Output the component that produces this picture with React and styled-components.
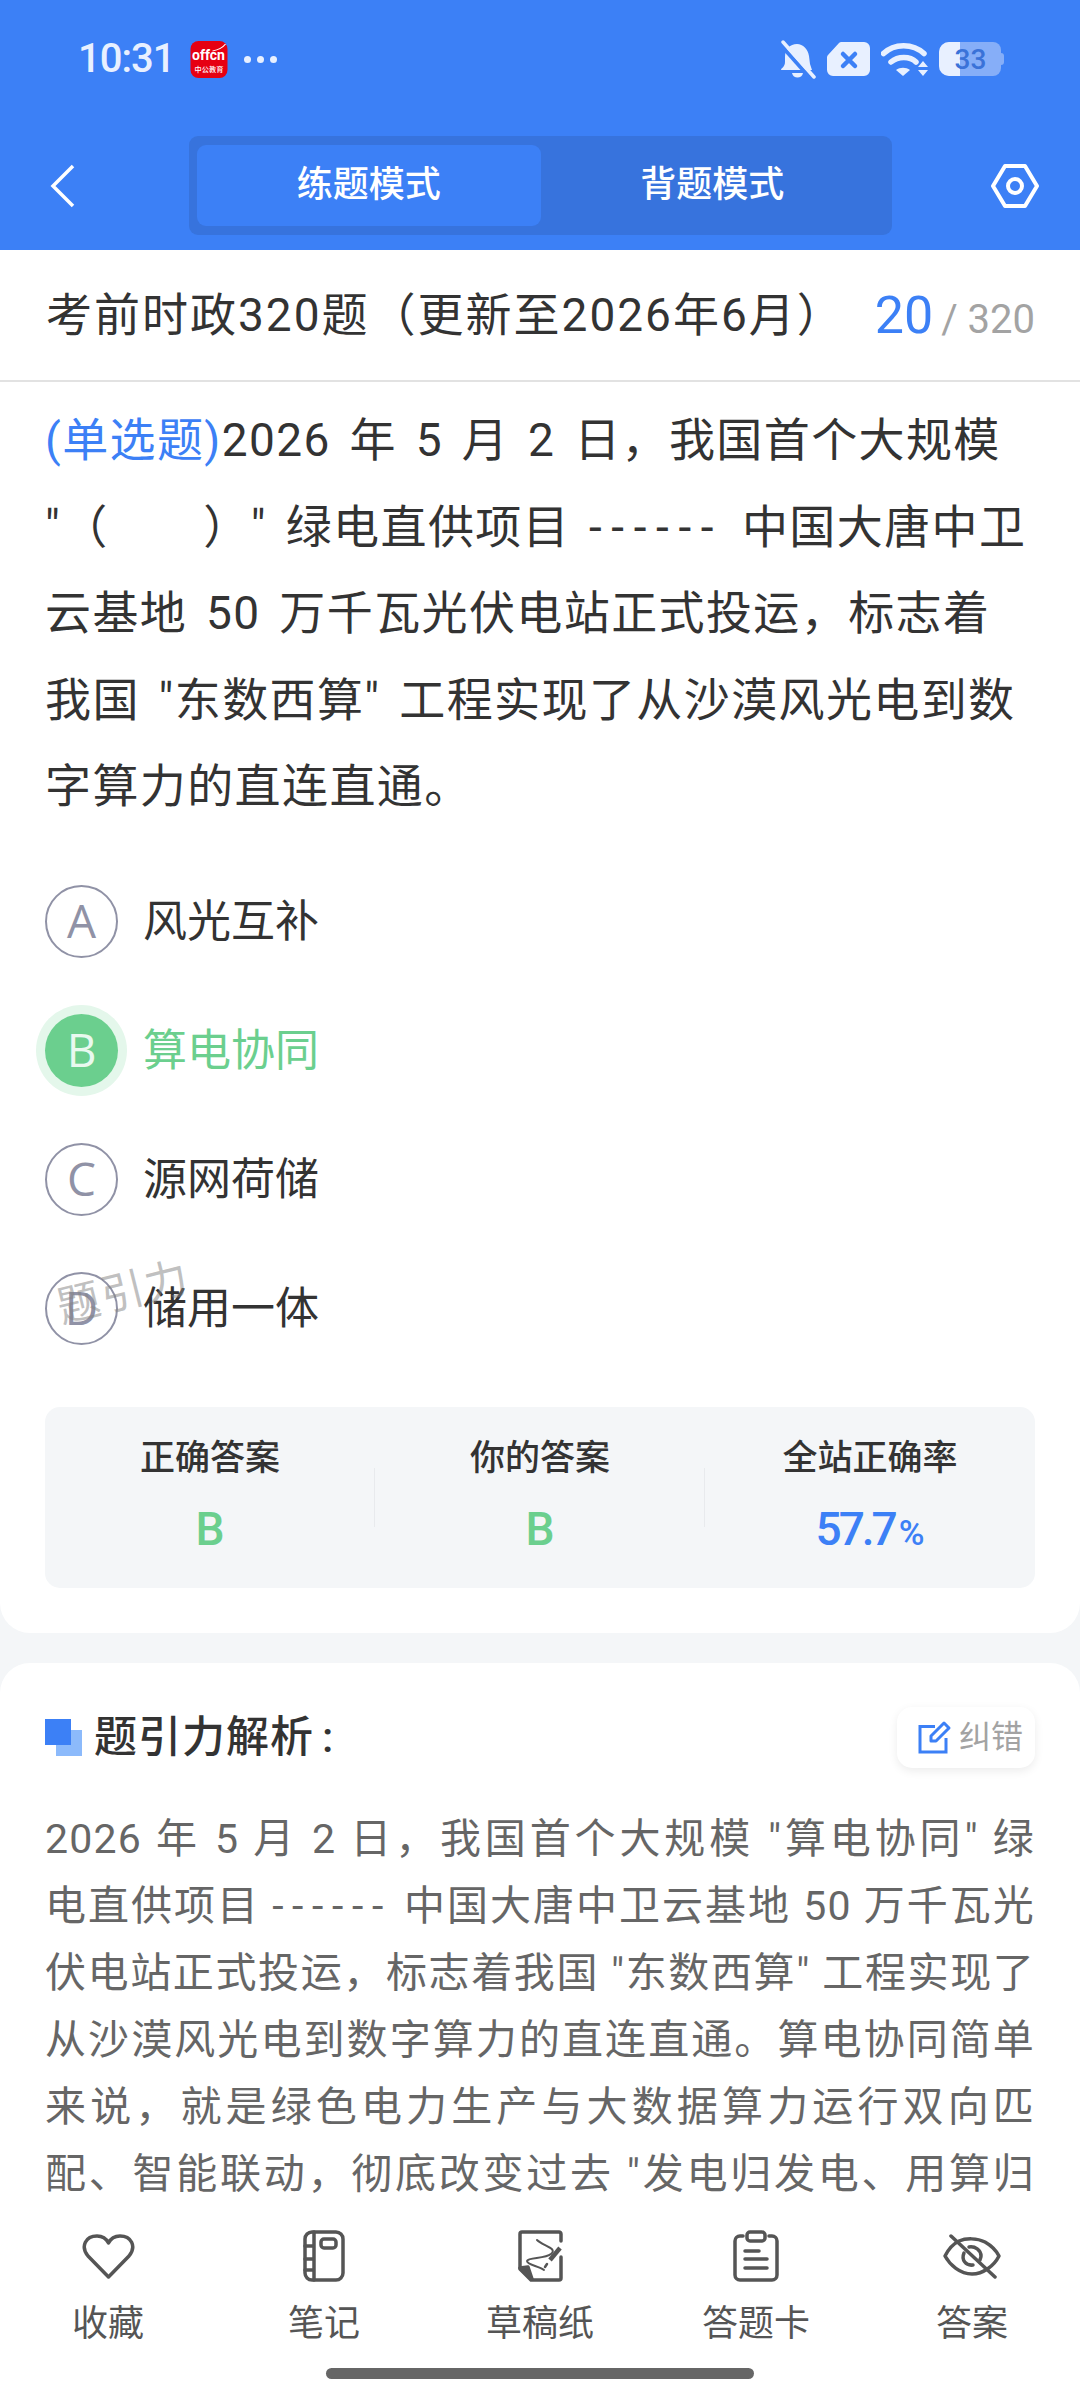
import React from "react";
import styled, { createGlobalStyle } from "styled-components";

const Global = createGlobalStyle`
  html, body { margin: 0; padding: 0; background: #f4f6f8; }
  body { font-family: "Roboto", "Noto Sans CJK SC", sans-serif; }
  * { box-sizing: border-box; }
`;

const cjk = `"Roboto", "Noto Sans CJK SC", sans-serif`;

const Phone = styled.div`
  position: relative;
  width: 1080px;
  height: 2400px;
  overflow: hidden;
  background: #f4f6f8;
  display: flex;
  flex-direction: column;
`;

const Head = styled.header`
  background: #3c80f6;
  height: 250px;
  display: flex;
  flex-direction: column;
`;

const StatusBar = styled.div`
  height: 118px;
  padding: 0 76px 0 78px;
  display: flex;
  align-items: center;
  color: #e8f0ff;
`;

const Clock = styled.span`
  font: 500 40px/1 ${cjk};
  letter-spacing: -1px;
  margin-right: 16px;
`;

const Dots = styled.span`
  display: flex;
  gap: 6px;
  margin-left: 16px;
  & > i { width: 7px; height: 7px; border-radius: 50%; background: #e8f0ff; }
`;

const StatusIcons = styled.div`
  margin-left: auto;
  display: flex;
  align-items: center;
  gap: 11px;
`;

const NavRow = styled.div`
  flex: 1;
  padding: 18px 40px 15px 46px;
  display: flex;
  align-items: center;
`;

const Tabs = styled.div`
  width: 703px;
  height: 99px;
  margin-left: 113px;
  padding: 9px 8px;
  border-radius: 9px;
  background: #3773dd;
  display: flex;
`;

const Tab = styled.div`
  flex: 1;
  border-radius: 9px;
  background: ${p => (p.$on ? "#3c80f6" : "transparent")};
  color: #fff;
  font: 500 36px/81px ${cjk};
  text-align: center;
`;

const Gear = styled.div`
  margin-left: auto;
  display: flex;
`;

const TitleBar = styled.div`
  height: 132px;
  background: #fff;
  border-bottom: 2px solid #e2e2e2;
  padding: 0 45px 0 46px;
  display: flex;
  align-items: center;
  justify-content: space-between;
`;

const Title = styled.h1`
  margin: 0;
  font: 400 46px/1 ${cjk};
  letter-spacing: 2px;
  color: #333;
  white-space: nowrap;
`;

const Count = styled.div`
  font-family: ${cjk};
  color: #a3a3a3;
  font-size: 40px;
  white-space: nowrap;
  & > b { font-weight: 400; font-size: 52px; color: #3c80f6; margin-right: 8px; }
`;

const Card = styled.section`
  background: #fff;
  border-radius: 0 0 30px 30px;
  padding: 15px 45px 45px;
`;

const Question = styled.p`
  margin: 0;
  font: 400 46px/86.500px ${cjk};
  letter-spacing: 1.4px;
  word-spacing: 6px;
  color: #333;
`;

const QType = styled.span`
  color: #3c80f6;
`;

const Line = styled.span`
  display: block;
  white-space: pre;
`;

const Dash = styled.span`
  letter-spacing: 0.21em;
`;

const Options = styled.div`
  margin-top: 56px;
  display: flex;
  flex-direction: column;
  gap: 57px;
`;

const Option = styled.div`
  position: relative;
  height: 72px;
  display: flex;
  align-items: center;
  gap: 25px;
  font: 400 44px/1 ${cjk};
  color: ${p => (p.$ok ? "#6bcf8e" : "#333")};
`;

const Badge = styled.div`
  width: 73px;
  height: 73px;
  padding-bottom: 4px;
  border-radius: 50%;
  display: flex;
  align-items: center;
  justify-content: center;
  font: 400 46px/1 "Open Sans", sans-serif;
  color: ${p => (p.$ok ? "#e9f9ef" : "#9092a6")};
  background: ${p => (p.$ok ? "#6bcf8e" : "transparent")};
  border: ${p => (p.$ok ? "none" : "2px solid #9092a6")};
  box-shadow: ${p => (p.$ok ? "0 0 0 9px #e4f7eb" : "none")};
`;

const Watermark = styled.span`
  position: absolute;
  left: 11px;
  top: -2px;
  font: 400 43px/1 ${cjk};
  color: rgba(130, 130, 130, 0.5);
  letter-spacing: 2px;
  transform: rotate(-14deg);
`;

const Stats = styled.div`
  margin-top: 62px;
  height: 181px;
  border-radius: 15px;
  background: #f4f6f8;
  display: flex;
`;

const Stat = styled.div`
  flex: 1;
  padding-top: 29px;
  position: relative;
  text-align: center;
  font-family: ${cjk};
  &:not(:last-child)::after {
    content: "";
    position: absolute;
    right: 0;
    top: 61px;
    height: 59px;
    width: 1px;
    background: #e8eaed;
  }
`;

const StatLabel = styled.div`
  font-size: 35px;
  line-height: 46px;
  font-weight: 500;
  color: #333;
`;

const StatValue = styled.div`
  margin-top: 22px;
  font-size: 46px;
  line-height: 50px;
  font-weight: 500;
  color: ${p => p.$c};
  letter-spacing: ${p => (p.$tight ? "-3px" : "0")};
  & > small { font-size: 35px; letter-spacing: 0; margin-left: 4px; }
`;

const Analysis = styled.section`
  flex: 1;
  margin-top: 30px;
  background: #fff;
  border-radius: 30px 30px 0 0;
  padding: 44px 45px 0;
`;

const AnalysisHead = styled.div`
  height: 61px;
  display: flex;
  align-items: center;
`;

const Mark = styled.div`
  position: relative;
  width: 37px;
  height: 37px;
  margin-right: 12px;
  &::before { content: ""; position: absolute; right: 0; bottom: 0; width: 26px; height: 26px; background: #8cbafb; }
  &::after { content: ""; position: absolute; left: 0; top: 0; width: 26px; height: 26px; background: #3c80f6; }
`;

const AnalysisTitle = styled.h2`
  margin: 0;
  font: 500 43px/1 ${cjk};
  letter-spacing: 1px;
  color: #333;
  & > span { margin-left: 8px; }
`;

const FixBtn = styled.div`
  margin-left: auto;
  width: 138px;
  height: 61px;
  padding-left: 21px;
  border-radius: 15px;
  background: #fff;
  box-shadow: 0 3px 10px rgba(0, 0, 0, 0.08);
  display: flex;
  align-items: center;
  gap: 7px;
  font: 400 32px/1 ${cjk};
  color: #a3a3a3;
`;

const Body = styled.div`
  margin-top: 38px;
  font: 400 41px/67px ${cjk};
  letter-spacing: 1.2px;
  color: #666;
`;

const BodyLine = styled.span`
  display: block;
  white-space: nowrap;
  text-align: justify;
  text-align-last: justify;
`;

const Bottom = styled.nav`
  position: absolute;
  left: 0;
  right: 0;
  bottom: 0;
  height: 195px;
  background: #fff;
  display: flex;
  padding-top: 24px;
`;

const Item = styled.div`
  flex: 1;
  display: flex;
  flex-direction: column;
  align-items: center;
  gap: 19px;
  font: 400 36px/44px ${cjk};
  color: #555;
`;

const IconSlot = styled.div`
  height: 54px;
  display: flex;
  align-items: center;
  justify-content: center;
`;

const HomeBar = styled.div`
  position: absolute;
  left: 326px;
  bottom: 21px;
  width: 428px;
  height: 11px;
  border-radius: 6px;
  background: #666;
`;

const stroke = { fill: "none", stroke: "#555", strokeWidth: 3.5, strokeLinecap: "round", strokeLinejoin: "round" };

const Logo = () => (
  <svg width="38" height="37" viewBox="0 0 37 37">
    <rect width="37" height="37" rx="8" fill="#e60012" />
    <text x="18" y="19" textAnchor="middle" fontSize="14" fontWeight="700" fontFamily="Roboto" fill="#fff">offcn</text>
    <text x="18.500" y="31" textAnchor="middle" fontSize="7.200" fontWeight="500" fontFamily="Noto Sans CJK SC" fill="#fff">中公教育</text>
    <path d="M22 10c5-1 10-3 13-7" fill="none" stroke="#fff" strokeWidth="1.200" />
  </svg>
);

const Bell = () => (
  <svg width="36" height="39" viewBox="0 0 36 39">
    <path d="M1 30c0-2 4-3 4-8V17c0-8 5-13 12-13 6 0 11 5 12 12l1 8 2 6z" fill="#e8f0ff" />
    <path d="M12 33h11c-1 6-10 6-11 0z" fill="#e8f0ff" />
    <path d="M0 4l32 36" stroke="#3c80f6" strokeWidth="4" />
    <path d="M3 2l31 35" stroke="#e8f0ff" strokeWidth="3.500" strokeLinecap="round" />
  </svg>
);

const Sim = () => (
  <svg width="43" height="34" viewBox="0 0 43 34">
    <path d="M15 0h22a6 6 0 0 1 6 6v22a6 6 0 0 1-6 6H6a6 6 0 0 1-6-6V16a4 4 0 0 1 1-3L12 1a4 4 0 0 1 3-1z" fill="#e8f0ff" />
    <path d="M16 12l12 12M28 12L16 24" stroke="#3c80f6" strokeWidth="4.500" strokeLinecap="round" />
  </svg>
);

const Wifi = () => (
  <svg width="47" height="34" viewBox="0 0 47 34">
    <path d="M2.500 11.500C13 1 32 1 43 11.500M10 20c7-6 19-6 25 0" fill="none" stroke="#e8f0ff" strokeWidth="5.500" strokeLinecap="round" />
    <path d="M15 28c4-3 10-3 14 0l-7 6z" fill="#e8f0ff" />
    <path d="M42 19l5 6h-10zM42 34l5-6h-10z" fill="#e8f0ff" />
  </svg>
);

const Battery = () => (
  <svg width="65" height="34" viewBox="0 0 65 34">
    <path d="M10 0h44a8 8 0 0 1 8 8v18a8 8 0 0 1-8 8H10a10 10 0 0 1-10-10V10A10 10 0 0 1 10 0z" fill="#86aef8" />
    <path d="M62 11a3 3 0 0 1 3 3v6a3 3 0 0 1-3 3z" fill="#86aef8" />
    <path d="M10 0h11v34H10a10 10 0 0 1-10-10V10A10 10 0 0 1 10 0z" fill="#e8f0ff" />
    <text x="31.500" y="27" textAnchor="middle" fontSize="28" fontWeight="500" fontFamily="Roboto" fill="#3a72d8">33</text>
  </svg>
);

const Back = () => (
  <svg width="30" height="46" viewBox="0 0 30 46">
    <path d="M27 3L7 23l20 20" fill="none" stroke="#fff" strokeWidth="3.500" />
  </svg>
);

const Nut = () => (
  <svg width="50" height="46" viewBox="0 0 50 46">
    <path d="M15 3h20l12 20-12 20H15L3 23z" fill="none" stroke="#fff" strokeWidth="4" strokeLinejoin="round" />
    <circle cx="25" cy="23" r="7" fill="none" stroke="#fff" strokeWidth="4" />
  </svg>
);

const Edit = () => (
  <svg width="34" height="34" viewBox="0 0 34 34">
    <path d="M17 6.500H2V32h26V18" fill="none" stroke="#3c80f6" strokeWidth="3" />
    <path d="M13 16L26 3l5 5-13 13h-5z" fill="none" stroke="#3c80f6" strokeWidth="3" strokeLinejoin="round" />
  </svg>
);

const Heart = () => (
  <svg width="53" height="47" viewBox="0 0 53 47" {...stroke}>
    <path d="M26.500 44L6 23C-2 13 4 3 15 3c5 0 9 2 11.500 7C29 5 33 3 38 3c11 0 17 10 9 20z" />
  </svg>
);

const Notebook = () => (
  <svg width="42" height="52" viewBox="0 0 42 52" {...stroke}>
    <rect x="2" y="2" width="38" height="48" rx="7" />
    <path d="M11 2v48M2 16h9M2 29h9M2 40h9" />
    <rect x="18" y="9" width="15" height="9" rx="3" />
  </svg>
);

const Draft = () => (
  <svg width="45" height="52" viewBox="0 0 45 52" {...stroke}>
    <path d="M43 11V4a2 2 0 0 0-2-2H4a2 2 0 0 0-2 2v35l11 11h28a2 2 0 0 0 2-2V27" />
    <path d="M2 38l8-1 4 12z" fill="#555" />
    <path d="M19 10c6 6 21 8 14 14C27 29 10 27 9 31c0 4 12 5 17 9" strokeWidth="2" />
    <path d="M42 18L32 30" strokeWidth="4.500" strokeLinecap="butt" />
    <path d="M29 34l-2 3" strokeWidth="2.500" />
  </svg>
);

const Sheet = () => (
  <svg width="46" height="52" viewBox="0 0 46 52" {...stroke}>
    <path d="M10 6H7a5 5 0 0 0-5 5v34a5 5 0 0 0 5 5h32a5 5 0 0 0 5-5V11a5 5 0 0 0-5-5h-3" />
    <rect x="14" y="2" width="18" height="9" rx="3" />
    <path d="M12 21h14M12 29h22M12 38h22" />
  </svg>
);

const EyeOff = () => (
  <svg width="58" height="46" viewBox="0 0 58 46" {...stroke}>
    <path d="M42 9c7 4 12 10 14 14-5 10-16 18-27 18-12 0-22-9-27-18 3-6 8-12 14-15 7-3 18-3 26 1z" />
    <path d="M21 20c-3 7 2 13 9 12M26 14c6-1 12 3 12 9 0 2-1 3-1 4" />
    <path d="M8 3l44 41" />
  </svg>
);

const opts = [
  { k: "A", t: "风光互补" },
  { k: "B", t: "算电协同", ok: true },
  { k: "C", t: "源网荷储" },
  { k: "D", t: "储用一体", mark: true },
];

const tools = [
  { t: "收藏", I: Heart },
  { t: "笔记", I: Notebook },
  { t: "草稿纸", I: Draft },
  { t: "答题卡", I: Sheet },
  { t: "答案", I: EyeOff },
];

export default function App() {
  return (
    <Phone>
      <Global />
      <Head>
        <StatusBar>
          <Clock>10:31</Clock>
          <Logo />
          <Dots><i /><i /><i /></Dots>
          <StatusIcons>
            <Bell />
            <Sim />
            <Wifi />
            <Battery />
          </StatusIcons>
        </StatusBar>
        <NavRow>
          <Back />
          <Tabs>
            <Tab $on>练题模式</Tab>
            <Tab>背题模式</Tab>
          </Tabs>
          <Gear><Nut /></Gear>
        </NavRow>
      </Head>
      <TitleBar>
        <Title>考前时政320题（更新至2026年6月）</Title>
        <Count><b>20</b>/ 320</Count>
      </TitleBar>
      <Card>
        <Question>
          <Line><QType>(单选题)</QType>2026 年 5 月 2 日，我国首个大规模</Line>
          <Line>"（　　）" 绿电直供项目 <Dash>------</Dash> 中国大唐中卫</Line>
          <Line>云基地 50 万千瓦光伏电站正式投运，标志着</Line>
          <Line>我国 "东数西算" 工程实现了从沙漠风光电到数</Line>
          <Line>字算力的直连直通。</Line>
        </Question>
        <Options>
          {opts.map(o => (
            <Option key={o.k} $ok={o.ok}>
              <Badge $ok={o.ok}>{o.k}</Badge>
              {o.t}
              {o.mark && <Watermark>题引力</Watermark>}
            </Option>
          ))}
        </Options>
        <Stats>
          <Stat>
            <StatLabel>正确答案</StatLabel>
            <StatValue $c="#6bcf8e">B</StatValue>
          </Stat>
          <Stat>
            <StatLabel>你的答案</StatLabel>
            <StatValue $c="#6bcf8e">B</StatValue>
          </Stat>
          <Stat>
            <StatLabel>全站正确率</StatLabel>
            <StatValue $c="#3c80f6" $tight>57.7<small>%</small></StatValue>
          </Stat>
        </Stats>
      </Card>
      <Analysis>
        <AnalysisHead>
          <Mark />
          <AnalysisTitle>题引力解析<span>:</span></AnalysisTitle>
          <FixBtn><Edit />纠错</FixBtn>
        </AnalysisHead>
        <Body>
          <BodyLine>2026 年 5 月 2 日，我国首个大规模 "算电协同" 绿</BodyLine>
          <BodyLine>电直供项目 <Dash>------</Dash> 中国大唐中卫云基地 50 万千瓦光</BodyLine>
          <BodyLine>伏电站正式投运，标志着我国 "东数西算" 工程实现了</BodyLine>
          <BodyLine>从沙漠风光电到数字算力的直连直通。算电协同简单</BodyLine>
          <BodyLine>来说，就是绿色电力生产与大数据算力运行双向匹</BodyLine>
          <BodyLine>配、智能联动，彻底改变过去 "发电归发电、用算归</BodyLine>
        </Body>
      </Analysis>
      <Bottom>
        {tools.map(({ t, I }) => (
          <Item key={t}><IconSlot><I /></IconSlot>{t}</Item>
        ))}
      </Bottom>
      <HomeBar />
    </Phone>
  );
}
